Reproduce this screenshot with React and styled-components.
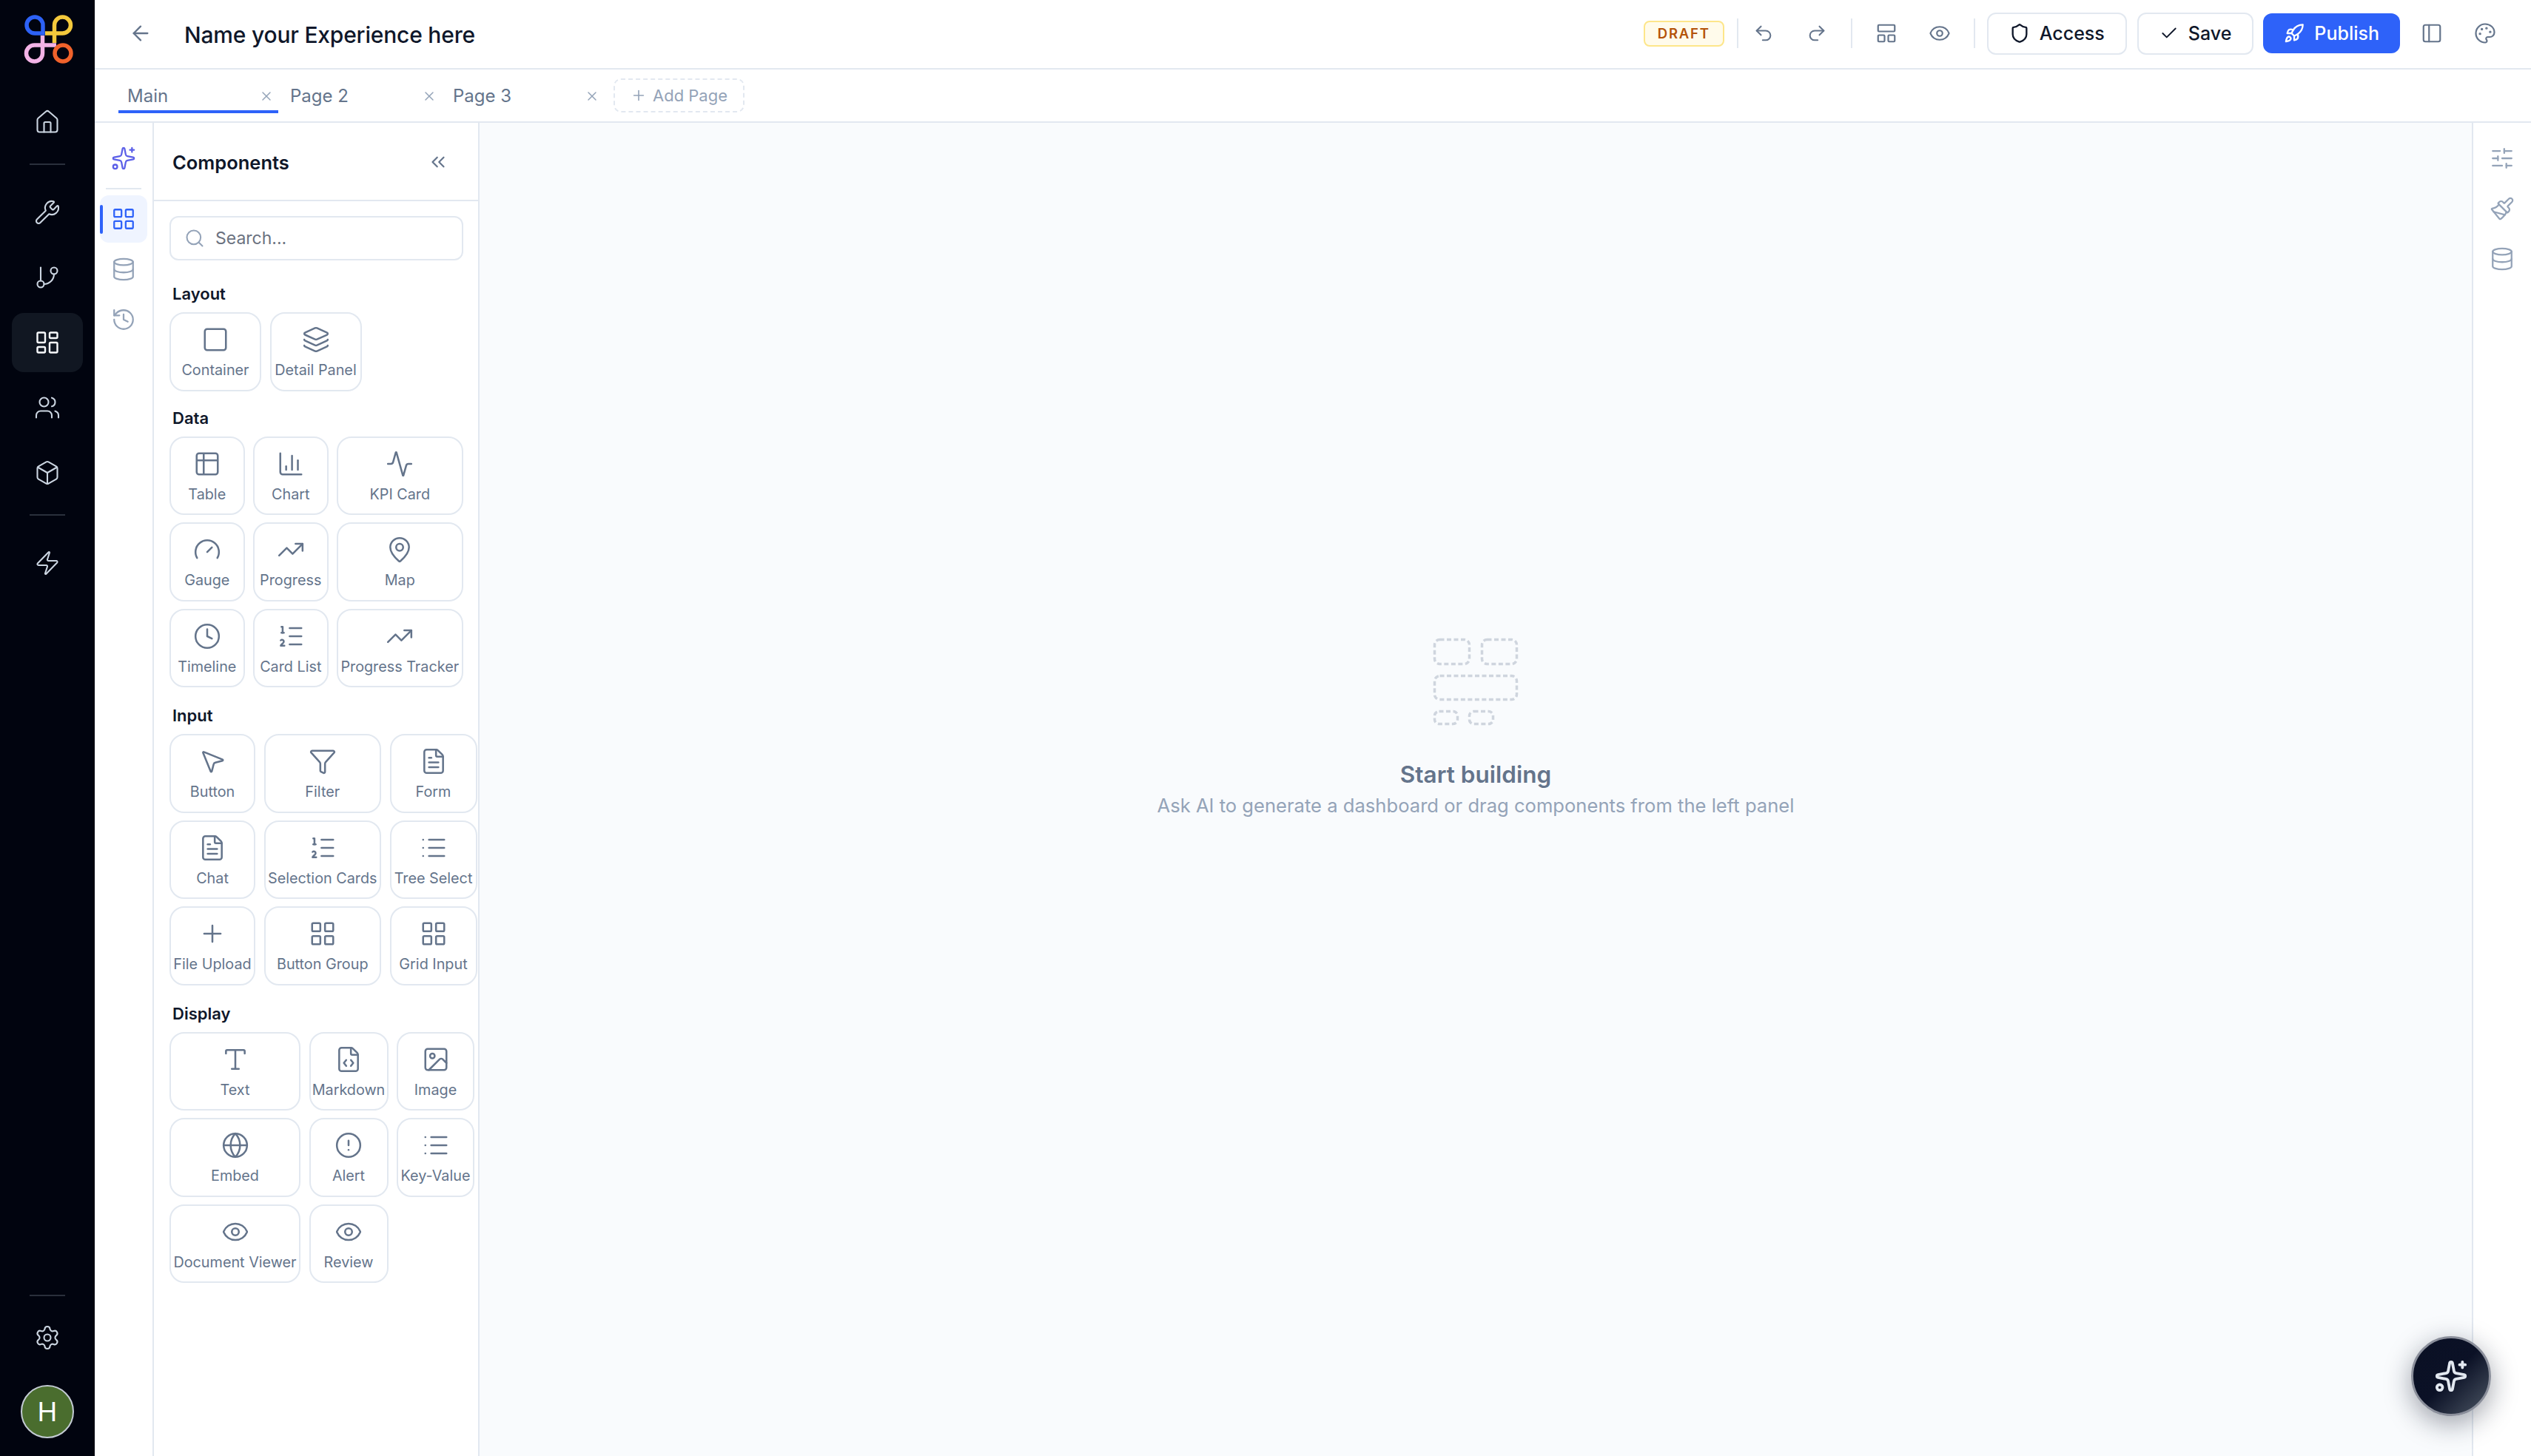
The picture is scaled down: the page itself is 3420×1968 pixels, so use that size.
import React from 'react';
import styled, { createGlobalStyle } from 'styled-components';
import {
    Activity, ArrowLeft, Box, ChartColumn, Check, ChevronsLeft, CircleAlert, Clock, Database, Eye,
    FileCode, FileText, Funnel, Gauge, GitBranch, Globe, History, House, Image as ImageIcon, Layers,
    LayoutDashboard, LayoutGrid, LayoutPanelTop, List, ListOrdered, MapPin, MousePointer2, Paintbrush,
    Palette, PanelLeft, Plus, Redo2, Rocket, Search, Settings, Shield, SlidersHorizontal, Sparkles,
    Square, Table2, TrendingUp, Type, Undo2, Users, Wrench, X, Zap,
} from 'lucide-react';

const tabs = ['Main', 'Page 2', 'Page 3'];

const sections = [
    {
        title: 'Layout',
        cols: '124px 124px',
        gapAfter: 22,
        items: [['Container', Square], ['Detail Panel', Layers]],
    },
    {
        title: 'Data',
        cols: '101.5px 101.5px 170.5px',
        gapAfter: 24,
        items: [
            ['Table', Table2], ['Chart', ChartColumn], ['KPI Card', Activity],
            ['Gauge', Gauge], ['Progress', TrendingUp], ['Map', MapPin],
            ['Timeline', Clock], ['Card List', ListOrdered], ['Progress Tracker', TrendingUp],
        ],
    },
    {
        title: 'Input',
        cols: '116px 158.5px 118px',
        gapAfter: 24,
        items: [
            ['Button', MousePointer2], ['Filter', Funnel], ['Form', FileText],
            ['Chat', FileText], ['Selection Cards', ListOrdered], ['Tree Select', List],
            ['File Upload', Plus], ['Button Group', LayoutGrid], ['Grid Input', LayoutGrid],
        ],
    },
    {
        title: 'Display',
        cols: '177px 107px 105px',
        gapAfter: 24,
        items: [
            ['Text', Type], ['Markdown', FileCode], ['Image', ImageIcon],
            ['Embed', Globe], ['Alert', CircleAlert], ['Key-Value', List],
            ['Document Viewer', Eye], ['Review', Eye],
        ],
    },
];

const GlobalStyle = createGlobalStyle`
    html, body {
        margin: 0;
        padding: 0;
        background: #fff;
        font-family: Inter, "Noto Sans", sans-serif;
    }
    * {
        box-sizing: border-box;
    }
`;

const Page = styled.div`
    display: flex;
    width: 3420px;
    height: 1968px;
    overflow: hidden;
    position: relative;
`;

const Sidebar = styled.aside`
    width: 128px;
    flex-shrink: 0;
    background: #01040f;
    display: flex;
    flex-direction: column;
    align-items: center;
    gap: 8px;
    padding: 17px 0 24px;
    color: #cbd5e1;
`;

const Logo = styled.svg`
    width: 72px;
    height: 72px;
    margin-bottom: 28px;
`;

const SideButton = styled.div`
    width: 96px;
    height: 80px;
    border-radius: 16px;
    display: flex;
    align-items: center;
    justify-content: center;
    background: ${(p) => (p.$active ? '#111722' : 'transparent')};
    color: ${(p) => (p.$active ? '#f8fafc' : '#cbd5e1')};
`;

const SideLine = styled.div`
    width: 48px;
    height: 2px;
    background: #2a303c;
    margin: ${(p) => (p.$tight ? '8px 0' : '8px 0 16px')};
`;

const Spacer = styled.div`
    flex: 1;
`;

const Avatar = styled.div`
    width: 72px;
    height: 72px;
    margin-top: 16px;
    border-radius: 50%;
    border: 2px solid #c3cbd3;
    background: #4a6d2e;
    color: #fff;
    font-size: 36px;
    display: flex;
    align-items: center;
    justify-content: center;
`;

const Main = styled.div`
    flex: 1;
    min-width: 0;
    display: flex;
    flex-direction: column;
`;

const Header = styled.header`
    height: 94px;
    flex-shrink: 0;
    border-bottom: 2px solid #e2e8f0;
    display: flex;
    align-items: center;
    padding: 0 32px 2px 46px;
`;

const Back = styled.div`
    width: 32px;
    height: 32px;
    color: #64748b;
    display: flex;
    align-items: center;
    justify-content: center;
    margin-right: 43px;
`;

const Title = styled.div`
    font-size: 30px;
    font-weight: 500;
    letter-spacing: -0.2px;
    color: #0f172a;
    margin-top: 4px;
`;

const Actions = styled.div`
    margin-left: auto;
    display: flex;
    align-items: center;
`;

const Draft = styled.div`
    width: 109px;
    height: 35px;
    border: 2px solid #fde68a;
    border-radius: 8px;
    background: #fffbeb;
    color: #b45309;
    font-size: 18.5px;
    font-weight: 600;
    letter-spacing: 1.8px;
    display: flex;
    align-items: center;
    justify-content: center;
`;

const VLine = styled.div`
    width: 2px;
    height: 40px;
    background: #e2e8f0;
    margin: ${(p) => (p.$first ? '0 4px 0 17px' : '0 16px')};
`;

const IconGroup = styled.div`
    display: flex;
    gap: 12px;
    margin-left: ${(p) => p.$ml || 0}px;
`;

const IconButton = styled.div`
    width: 60px;
    height: 56px;
    display: flex;
    align-items: center;
    justify-content: center;
    color: #64748b;
`;

const Button = styled.div`
    height: ${(p) => (p.$primary ? 54 : 57)}px;
    padding: 0 28px;
    margin-left: ${(p) => p.$ml || 0}px;
    border-radius: 12px;
    border: ${(p) => (p.$primary ? 'none' : '2px solid #e2e8f0')};
    background: ${(p) => (p.$primary ? '#2e62f9' : '#fff')};
    color: ${(p) => (p.$primary ? '#fff' : '#0f172a')};
    font-size: 25px;
    font-weight: 500;
    display: flex;
    align-items: center;
    gap: 13px;
`;

const TabBar = styled.nav`
    height: 72px;
    flex-shrink: 0;
    border-bottom: 2px solid #e2e8f0;
    display: flex;
    align-items: flex-start;
    padding: 12px 0 0 32px;
`;

const Tab = styled.div`
    width: 216px;
    height: 47px;
    margin-right: 4px;
    padding: 4px 6px 0 12px;
    display: flex;
    align-items: center;
    justify-content: space-between;
    font-size: 24px;
    color: #64748b;
    border-bottom: 4px solid ${(p) => (p.$active ? '#2e62f9' : 'transparent')};
    border-radius: 4px 4px 0 0;
    svg {
        color: #94a3b8;
    }
`;

const AddPage = styled.div`
    width: 177px;
    height: 46px;
    margin-left: 9px;
    border: 2px dashed #e2e8f0;
    border-radius: 10px;
    display: flex;
    align-items: center;
    justify-content: center;
    gap: 8px;
    font-size: 22px;
    color: #94a3b8;
`;

const Body = styled.div`
    flex: 1;
    min-height: 0;
    display: flex;
`;

const Rail = styled.div`
    width: 80px;
    flex-shrink: 0;
    display: flex;
    flex-direction: column;
    align-items: center;
    gap: 4px;
    padding-top: 16px;
    background: #fff;
    ${(p) => (p.$right ? 'border-left' : 'border-right')}: 2px solid #e2e8f0;
`;

const RailButton = styled.div`
    position: relative;
    width: 64px;
    height: 64px;
    border-radius: 12px;
    display: flex;
    align-items: center;
    justify-content: center;
    background: ${(p) => (p.$active ? '#eff4ff' : 'transparent')};
    color: ${(p) => p.$color || '#94a3b8'};
    ${(p) => p.$active && `
        &::before {
            content: '';
            position: absolute;
            left: 0;
            top: 13px;
            width: 4px;
            height: 39px;
            border-radius: 2px;
            background: #2e62f9;
        }
    `}
`;

const RailLine = styled.div`
    width: 48px;
    height: 2px;
    background: #e2e8f0;
    margin: 4px 0;
`;

const Panel = styled.section`
    width: 440px;
    flex-shrink: 0;
    border-right: 2px solid #e2e8f0;
    background: #fff;
    display: flex;
    flex-direction: column;
`;

const PanelHead = styled.div`
    height: 106px;
    flex-shrink: 0;
    border-bottom: 2px solid #e2e8f0;
    display: flex;
    align-items: center;
    justify-content: space-between;
    padding: 2px 39px 0 25px;
    font-size: 25.5px;
    font-weight: 600;
    color: #0f172a;
    svg {
        color: #64748b;
    }
`;

const PanelBody = styled.div`
    padding: 20px 0 0 21px;
`;

const SearchBox = styled.div`
    width: 397px;
    height: 60px;
    border: 2px solid #e2e8f0;
    border-radius: 12px;
    display: flex;
    align-items: center;
    gap: 14px;
    padding-left: 18px;
    margin-bottom: 31px;
    font-size: 23px;
    color: #6b7280;
    svg {
        color: #94a3b8;
    }
`;

const Section = styled.div`
    margin-bottom: ${(p) => p.$after}px;
`;

const SectionTitle = styled.div`
    height: 28px;
    line-height: 28px;
    margin: 0 0 11px 4px;
    font-size: 22px;
    font-weight: 600;
    color: #0f172a;
`;

const TileGrid = styled.div`
    display: grid;
    grid-template-columns: ${(p) => p.$cols};
    grid-auto-rows: 106.5px;
    gap: 10px 11.5px;
`;

const Tile = styled.div`
    border: 2px solid #e2e8f0;
    border-radius: 20px;
    background: #fff;
    display: flex;
    flex-direction: column;
    align-items: center;
    padding-top: 16px;
    gap: 9px;
    color: #64748b;
    font-size: 19.8px;
    line-height: 26px;
    white-space: nowrap;
`;

const Canvas = styled.main`
    flex: 1;
    min-width: 0;
    background: #f9fbfd;
    display: flex;
    flex-direction: column;
    align-items: center;
    padding-top: 697px;
`;

const Placeholder = styled.svg`
    display: block;
    width: 114px;
    height: 117px;
    margin-bottom: 48px;
    overflow: visible;
    fill: none;
    stroke: #cfd5de;
    stroke-width: 3.5;
    stroke-dasharray: 6 3.5;
`;

const Heading = styled.div`
    font-size: 31.5px;
    line-height: 38px;
    font-weight: 600;
    color: #64748b;
    margin-bottom: 5px;
`;

const SubText = styled.div`
    font-size: 25.6px;
    line-height: 36px;
    color: #94a3b8;
`;

const Fab = styled.div`
    position: absolute;
    right: 54px;
    bottom: 54px;
    width: 108px;
    height: 108px;
    border-radius: 50%;
    border: 3px solid #8b8f9b;
    background: linear-gradient(135deg, #0a1024 0%, #0b1126 50%, #4b5563 100%);
    box-shadow: 0 10px 36px rgba(15, 23, 42, 0.4);
    color: #e2e8f0;
    display: flex;
    align-items: center;
    justify-content: center;
`;

const App = () => {
    return (
        <Page>
            <GlobalStyle />
            <Sidebar>
                <Logo viewBox="28 17 72 72" fill="none" strokeWidth="5.5">
                    <path d="M58 45V35A11 11 0 1 0 47 45H58Z" stroke="#2d62f6" />
                    <path d="M61 45H84.5A11 11 0 1 0 73.5 34V58" stroke="#f4c93c" />
                    <path d="M57.5 48V72A11 11 0 1 1 46.5 61H76" stroke="#f3b3e6" />
                    <circle cx="85" cy="72" r="11" stroke="#f0622b" />
                </Logo>
                <SideButton><House size={36} strokeWidth={1.4} /></SideButton>
                <SideLine />
                <SideButton><Wrench size={36} strokeWidth={1.4} /></SideButton>
                <SideButton><GitBranch size={36} strokeWidth={1.4} /></SideButton>
                <SideButton $active><LayoutDashboard size={36} strokeWidth={1.6} /></SideButton>
                <SideButton><Users size={36} strokeWidth={1.4} /></SideButton>
                <SideButton><Box size={36} strokeWidth={1.4} /></SideButton>
                <SideLine />
                <SideButton><Zap size={36} strokeWidth={1.4} /></SideButton>
                <Spacer />
                <SideLine $tight />
                <SideButton><Settings size={36} strokeWidth={1.4} /></SideButton>
                <Avatar>H</Avatar>
            </Sidebar>

            <Main>
                <Header>
                    <Back><ArrowLeft size={32} strokeWidth={1.75} /></Back>
                    <Title>Name your Experience here</Title>
                    <Actions>
                        <Draft>DRAFT</Draft>
                        <VLine $first />
                        <IconGroup>
                            <IconButton><Undo2 size={28} strokeWidth={1.75} /></IconButton>
                            <IconButton><Redo2 size={28} strokeWidth={1.75} /></IconButton>
                        </IconGroup>
                        <VLine />
                        <IconGroup>
                            <IconButton><LayoutPanelTop size={30} strokeWidth={1.75} /></IconButton>
                            <IconButton><Eye size={30} strokeWidth={1.75} /></IconButton>
                        </IconGroup>
                        <VLine />
                        <Button><Shield size={28} strokeWidth={2} />Access</Button>
                        <Button $ml={14}><Check size={26} strokeWidth={1.75} />Save</Button>
                        <Button $primary $ml={13}><Rocket size={28} strokeWidth={2} />Publish</Button>
                        <IconGroup $ml={13}>
                            <IconButton><PanelLeft size={30} strokeWidth={1.75} /></IconButton>
                            <IconButton><Palette size={30} strokeWidth={1.75} /></IconButton>
                        </IconGroup>
                    </Actions>
                </Header>

                <TabBar>
                    {tabs.map((tab, i) => (
                        <Tab key={tab} $active={i === 0}>
                            {tab}
                            <X size={20} strokeWidth={1.75} />
                        </Tab>
                    ))}
                    <AddPage><Plus size={22} strokeWidth={1.75} />Add Page</AddPage>
                </TabBar>

                <Body>
                    <Rail>
                        <RailButton $color="#5b5fe8"><Sparkles size={34} strokeWidth={1.6} /></RailButton>
                        <RailLine />
                        <RailButton $active $color="#2e62f9"><LayoutGrid size={34} strokeWidth={1.6} /></RailButton>
                        <RailButton><Database size={34} strokeWidth={1.6} /></RailButton>
                        <RailButton><History size={34} strokeWidth={1.6} /></RailButton>
                    </Rail>

                    <Panel>
                        <PanelHead>
                            Components
                            <ChevronsLeft size={30} strokeWidth={1.75} />
                        </PanelHead>
                        <PanelBody>
                            <SearchBox>
                                <Search size={28} strokeWidth={1.75} />
                                Search...
                            </SearchBox>
                            {sections.map((section) => (
                                <Section key={section.title} $after={section.gapAfter}>
                                    <SectionTitle>{section.title}</SectionTitle>
                                    <TileGrid $cols={section.cols}>
                                        {section.items.map(([label, Icon]) => (
                                            <Tile key={label}>
                                                <Icon size={38} strokeWidth={1.6} />
                                                {label}
                                            </Tile>
                                        ))}
                                    </TileGrid>
                                </Section>
                            ))}
                        </PanelBody>
                    </Panel>

                    <Canvas>
                        <Placeholder viewBox="0 0 114 117">
                            <rect x="1.5" y="1.5" width="47" height="33" rx="7" />
                            <rect x="65.5" y="1.5" width="47" height="33" rx="7" />
                            <rect x="1.5" y="50.5" width="111" height="32" rx="7" />
                            <rect x="1.5" y="98.5" width="31" height="17" rx="6" />
                            <rect x="48.5" y="98.5" width="32" height="17" rx="6" />
                        </Placeholder>
                        <Heading>Start building</Heading>
                        <SubText>Ask AI to generate a dashboard or drag components from the left panel</SubText>
                    </Canvas>

                    <Rail $right>
                        <RailButton><SlidersHorizontal size={34} strokeWidth={1.6} /></RailButton>
                        <RailButton><Paintbrush size={34} strokeWidth={1.6} /></RailButton>
                        <RailButton><Database size={34} strokeWidth={1.6} /></RailButton>
                    </Rail>
                </Body>
            </Main>

            <Fab><Sparkles size={46} strokeWidth={2} /></Fab>
        </Page>
    );
};

export default App;
